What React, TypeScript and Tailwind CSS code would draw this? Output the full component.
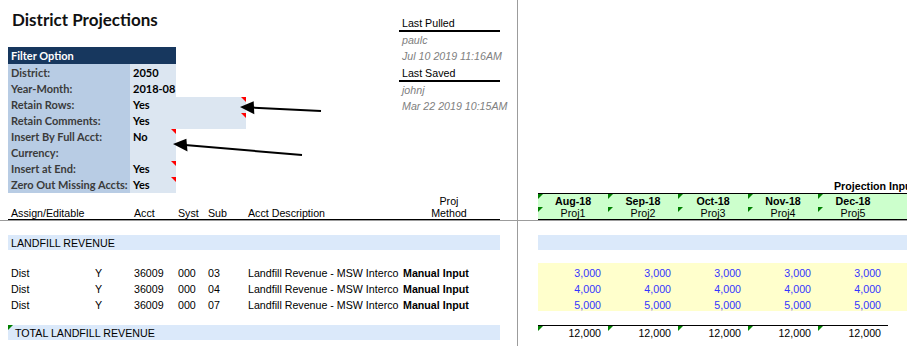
import React from 'react';

type Filter = { label: string; value: string; wide?: boolean; mark?: boolean };

const filters: Filter[] = [
  { label: 'District:', value: '2050' },
  { label: 'Year-Month:', value: '2018-08' },
  { label: 'Retain Rows:', value: 'Yes', wide: true },
  { label: 'Retain Comments:', value: 'Yes', wide: true },
  { label: 'Insert By Full Acct:', value: 'No', mark: true },
  { label: 'Currency:', value: '' },
  { label: 'Insert at End:', value: 'Yes', mark: true },
  { label: 'Zero Out Missing Accts:', value: 'Yes', mark: true },
];

const rows = [
  { sub: '03', amount: '3,000' },
  { sub: '04', amount: '4,000' },
  { sub: '07', amount: '5,000' },
];

const months = [
  { month: 'Aug-18', proj: 'Proj1' },
  { month: 'Sep-18', proj: 'Proj2' },
  { month: 'Oct-18', proj: 'Proj3' },
  { month: 'Nov-18', proj: 'Proj4' },
  { month: 'Dec-18', proj: 'Proj5' },
];

function RedMark() {
  return (
    <span className="absolute right-0 top-0 h-0 w-0 border-l-[5px] border-t-[5px] border-l-transparent border-t-[#ff0000]" />
  );
}

function GreenMark() {
  return (
    <span className="absolute left-0 top-0 h-0 w-0 border-r-[5px] border-t-[5px] border-r-transparent border-t-[#008000]" />
  );
}

function FilterTable() {
  return (
    <div className="font-['Lato',sans-serif] text-[11px] font-bold">
      <div className="flex h-[17px] w-[168px] items-center bg-[#17375e] pl-[3px] text-white">Filter Option</div>
      {filters.map((f, i) => (
        <div key={f.label} className={`flex items-center ${i === 0 ? 'h-[17px]' : 'h-[16px]'}`}>
          <div className="flex h-full w-[122px] items-center whitespace-nowrap bg-[#b8cce4] pl-[3px] text-[#3b3b3b]">{f.label}</div>
          <div className="relative flex h-full w-[46px] items-center bg-[#dce6f1] pl-[3px] text-black">
            {f.value}
            {f.mark && <RedMark />}
          </div>
          {f.wide && (
            <div className="relative h-full w-[70px] bg-[#dce6f1]">
              <RedMark />
            </div>
          )}
        </div>
      ))}
    </div>
  );
}

function LastUpdated() {
  return (
    <div className="ml-[153px] mt-[14px] w-[101px] text-[10.67px]">
      <div className="flex h-[18px] items-center border-b-2 border-black pl-[3px] pt-[2px]">Last Pulled</div>
      <div className="flex h-[16px] items-center pl-[3px] italic text-[#808080]">paulc</div>
      <div className="flex h-[16px] items-center whitespace-nowrap pl-[3px] italic text-[#808080]">Jul 10 2019 11:16AM</div>
      <div className="flex h-[18px] items-center border-b-2 border-black pl-[3px] pt-[2px]">Last Saved</div>
      <div className="flex h-[16px] items-center pl-[3px] italic text-[#808080]">johnj</div>
      <div className="flex h-[16px] items-center whitespace-nowrap pl-[3px] italic text-[#808080]">Mar 22 2019 10:15AM</div>
    </div>
  );
}

function Arrows() {
  return (
    <svg className="pointer-events-none absolute left-0 top-0" width="907" height="346">
      <line x1="321" y1="111" x2="252" y2="107.6" stroke="#000" strokeWidth="2" />
      <polygon points="240,107 253.7,101.2 254.3,114.2" fill="#000" />
      <line x1="302" y1="155" x2="185" y2="145" stroke="#000" strokeWidth="2" />
      <polygon points="173,144 186.4,138.8 187.5,151.6" fill="#000" />
    </svg>
  );
}

export default function App() {
  return (
    <div className="relative flex h-[346px] w-[907px] overflow-hidden bg-white font-['Liberation_Sans',Arial,sans-serif] text-[10.67px] leading-[12px] text-black">
      {/* frozen left pane */}
      <div className="flex w-[518px] shrink-0 flex-col border-r border-[#9c9c9c]">
        <div className="flex h-[221px] flex-col border-b border-[#9c9c9c]">
          <div className="flex pl-[8px]">
            <div className="w-[238px]">
              <h1 className="h-[47px] whitespace-nowrap pl-[4px] pt-[9px] font-['Lato',sans-serif] text-[17px] font-bold leading-[21px] text-[#111]">
                District Projections
              </h1>
              <FilterTable />
            </div>
            <LastUpdated />
          </div>
          <div className="ml-[8px] flex h-[27px] w-[492px] items-end whitespace-nowrap border-b border-black">
            <div className="w-[126px] pl-[3px]">Assign/Editable</div>
            <div className="w-[44px]">Acct</div>
            <div className="w-[30px]">Syst</div>
            <div className="w-[40px]">Sub</div>
            <div className="w-[155px]">Acct Description</div>
            <div className="flex w-[97px] flex-col items-center pr-[5px] leading-[12px]">
              <span>Proj</span>
              <span>Method</span>
            </div>
          </div>
        </div>

        <div className="flex flex-col pl-[8px]">
          <div className="mt-[14px] flex h-[15px] w-[492px] items-center bg-[#dbe9fa] pl-[3px]">LANDFILL REVENUE</div>
          <div className="mt-[13px]">
            {rows.map((r) => (
              <div key={r.sub} className="flex h-[16px] items-end whitespace-nowrap">
                <div className="w-[87px] pl-[3px]">Dist</div>
                <div className="w-[39px]">Y</div>
                <div className="w-[44px]">36009</div>
                <div className="w-[30px]">000</div>
                <div className="w-[40px]">{r.sub}</div>
                <div className="w-[155px]">Landfill Revenue - MSW Interco</div>
                <div className="font-bold">Manual Input</div>
              </div>
            ))}
          </div>
          <div className="relative mt-[14px] flex h-[15px] w-[492px] items-center bg-[#dbe9fa] pl-[7px]">
            <GreenMark />
            TOTAL LANDFILL REVENUE
          </div>
        </div>
      </div>

      {/* scrolling right pane */}
      <div className="flex min-w-0 flex-1 flex-col">
        <div className="flex h-[221px] flex-col justify-end border-b border-[#9c9c9c]">
          <div className="h-[14px] whitespace-nowrap pl-[316px] font-bold leading-[14px]">Projection Input</div>
          <div className="ml-[20px] flex h-[27px] border-y border-black bg-[#ccffcc]">
            {months.map((m) => (
              <div key={m.month} className="flex w-[70px] shrink-0 flex-col">
                <div className="relative flex h-[13px] items-center justify-center font-bold">
                  <GreenMark />
                  {m.month}
                </div>
                <div className="relative flex h-[12px] items-center justify-center">
                  <GreenMark />
                  {m.proj}
                </div>
              </div>
            ))}
          </div>
        </div>

        <div className="flex flex-col pl-[20px]">
          <div className="mt-[14px] h-[15px] bg-[#dbe9fa]" />
          <div className="mt-[13px] bg-[#ffffcc]">
            {rows.map((r) => (
              <div key={r.sub} className="flex h-[16px] items-end text-[#3333ff]">
                {months.map((m) => (
                  <div key={m.month} className="w-[70px] shrink-0 pr-[7px] text-right">
                    {r.amount}
                  </div>
                ))}
              </div>
            ))}
          </div>
          <div className="mt-[14px] flex">
            <div className="flex border-t border-black">
              {months.map((m) => (
                <div key={m.month} className="relative flex h-[14px] w-[70px] items-center justify-end pr-[7px]">
                  <GreenMark />
                  12,000
                </div>
              ))}
            </div>
          </div>
        </div>
      </div>

      <Arrows />
    </div>
  );
}
